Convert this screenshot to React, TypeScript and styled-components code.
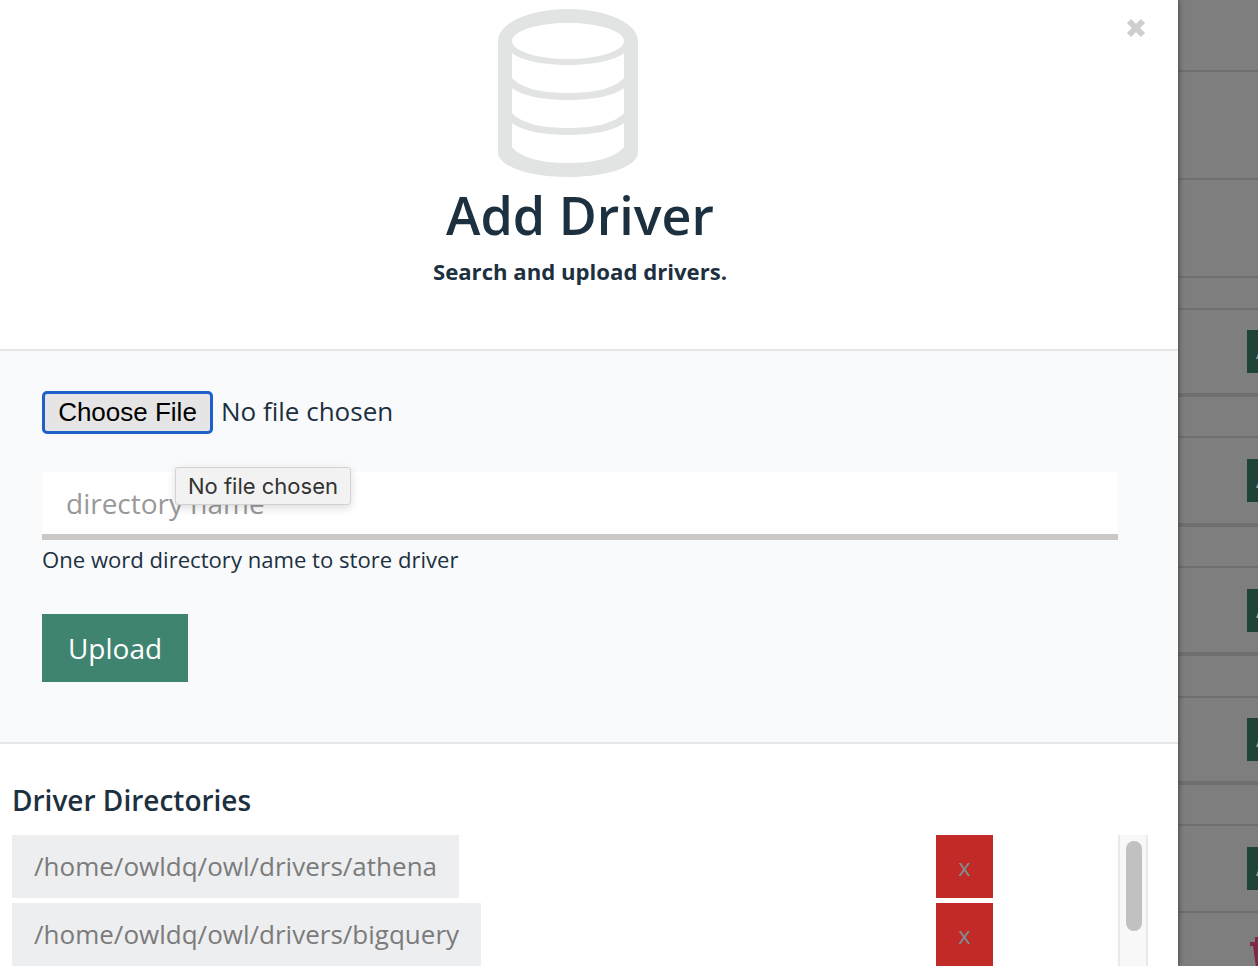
import { FC } from "react";
import styled, { createGlobalStyle } from "styled-components";

const ink = "#1d3040";

const GlobalStyle = createGlobalStyle`
  html, body {
    margin: 0;
    height: 100%;
    overflow: hidden;
    font-family: "Open Sans", "Liberation Sans", sans-serif;
    color: ${ink};
    background: #808080;
  }
  * {
    box-sizing: border-box;
  }
`;

// rows of the table behind the dialog: height, bottom rule, has action button
const backdropRows = [
  { height: 72, rule: 2, action: false },
  { height: 108, rule: 2, action: false },
  { height: 98, rule: 2, action: false },
  { height: 32, rule: 2, action: false },
  { height: 87, rule: 4, action: true },
  { height: 41, rule: 2, action: false },
  { height: 89, rule: 4, action: true },
  { height: 41, rule: 2, action: false },
  { height: 88, rule: 4, action: true },
  { height: 42, rule: 2, action: false },
  { height: 87, rule: 4, action: true },
  { height: 41, rule: 2, action: false },
  { height: 87, rule: 2, action: true },
];

const directories = ["/home/owldq/owl/drivers/athena", "/home/owldq/owl/drivers/bigquery"];

const DatabaseIcon: FC = () => (
  <IconSvg viewBox="0 0 140 169" width="140" height="169">
    <path
      fill="#e2e3e3"
      fillRule="evenodd"
      d="M0 32C0 14 32 0 70 0s70 14 70 32v111c0 15-32 25-70 25S0 158 0 143ZM14 32c0 10 25 18 56 18s56-8 56-18-25-18-56-18-56 8-56 18ZM14 44c10 8 32 12 56 12s46-4 56-12v25c-10 11-32 15-56 15s-46-4-56-15ZM14 79c10 8 32 12 56 12s46-4 56-12v25c-10 11-32 15-56 15s-46-4-56-15ZM14 114c10 8 32 12 56 12s46-4 56-12v24c-10 12-32 16-56 16s-46-4-56-16Z"
    />
  </IconSvg>
);

const App: FC = () => {
  return (
    <Page>
      <GlobalStyle />
      <Dialog>
        <CloseButton aria-label="close">
          <svg viewBox="0 0 20 20" width="20" height="20">
            <path d="M3 3l14 14M17 3L3 17" stroke="#cfcfcf" strokeWidth="6" fill="none" />
          </svg>
        </CloseButton>
        <Header>
          <DatabaseIcon />
          <Title>Add Driver</Title>
          <Subtitle>Search and upload drivers.</Subtitle>
        </Header>
        <UploadForm>
          <FileRow>
            <ChooseButton type="button">Choose File</ChooseButton>
            <FileStatus>No file chosen</FileStatus>
          </FileRow>
          <DirectoryInput placeholder="directory name" />
          <HelpText>One word directory name to store driver</HelpText>
          <UploadButton type="button">Upload</UploadButton>
          <Tooltip>No file chosen</Tooltip>
        </UploadForm>
        <DirectoriesSection>
          <SectionTitle>Driver Directories</SectionTitle>
          <ListFrame>
            <DirectoryList>
              {directories.map((dir) => (
                <DirectoryRow key={dir}>
                  <DirectoryName>{dir}</DirectoryName>
                  <RemoveButton type="button">x</RemoveButton>
                </DirectoryRow>
              ))}
            </DirectoryList>
            <ScrollTrack>
              <ScrollThumb />
            </ScrollTrack>
          </ListFrame>
        </DirectoriesSection>
      </Dialog>
      <Backdrop>
        {backdropRows.map((row, i) => (
          <BackdropRow key={i} $height={row.height} $rule={row.rule}>
            {row.action && <ActionButton>A</ActionButton>}
          </BackdropRow>
        ))}
        <LastRow>
          <svg viewBox="0 0 10 30" width="10" height="30">
            <path d="M5 0h5v5H5ZM0 5h10v4H0ZM3 9h7v21H6Z" fill="#7d2a47" />
          </svg>
        </LastRow>
      </Backdrop>
    </Page>
  );
};

export default App;

const Page = styled.div`
  display: flex;
  width: 100%;
  height: 100vh;
  overflow: hidden;
`;

const Dialog = styled.div`
  position: relative;
  z-index: 1;
  flex: 0 0 1178px;
  height: 100%;
  background: #fff;
  box-shadow: 0 0 6px rgba(0, 0, 0, 0.55);
`;

const CloseButton = styled.div`
  position: absolute;
  top: 18px;
  left: 1126px;
  width: 20px;
  height: 20px;
  line-height: 0;
`;

const Header = styled.header`
  height: 351px;
  padding: 9px 18px 0 0;
  display: flex;
  flex-direction: column;
  align-items: center;
  border-bottom: 2px solid #e6e6e6;
`;

const IconSvg = styled.svg`
  display: block;
  margin-right: 24px;
  flex: none;
`;

const Title = styled.h1`
  margin: 3px 0 0;
  font-size: 52px;
  line-height: 68px;
  font-weight: 600;
`;

const Subtitle = styled.p`
  margin: 7px 0 0;
  font-size: 22.15px;
  line-height: 30px;
  font-weight: 700;
`;

const UploadForm = styled.section`
  position: relative;
  height: 393px;
  padding: 40px 60px 0 42px;
  background: #f9fafc;
  border-bottom: 2px solid #e6e6e6;
`;

const FileRow = styled.div`
  display: flex;
  align-items: center;
  gap: 8px;
`;

const ChooseButton = styled.button`
  width: 171px;
  height: 43px;
  padding: 0;
  background: #e5e5e5;
  border: 3px solid #1f5fc9;
  border-radius: 5px;
  color: #000;
  font-family: "Liberation Sans", Arial, sans-serif;
  font-size: 26px;
`;

const FileStatus = styled.span`
  padding-bottom: 4px;
  font-size: 26px;
  line-height: 34px;
`;

const DirectoryInput = styled.input`
  display: block;
  width: 100%;
  height: 68px;
  margin-top: 38px;
  padding: 0 24px;
  background: #fff;
  border: 0;
  border-bottom: 6px solid #cbc9c7;
  border-radius: 0;
  outline: none;
  font-family: inherit;
  font-size: 28px;
  color: ${ink};

  &::placeholder {
    color: #999;
    opacity: 1;
  }
`;

const HelpText = styled.p`
  margin: 4px 0 0;
  font-size: 22.1px;
  line-height: 30px;
`;

const UploadButton = styled.button`
  display: block;
  width: 146px;
  height: 68px;
  margin-top: 40px;
  padding: 0;
  background: #3f8470;
  border: 0;
  color: #fff;
  font-family: inherit;
  font-size: 28px;
`;

const Tooltip = styled.div`
  position: absolute;
  top: 116px;
  left: 175px;
  width: 176px;
  height: 38px;
  padding-left: 12px;
  background: #f2f2f2;
  border: 1px solid #d2d2d2;
  border-radius: 3px;
  box-shadow: 0 3px 10px rgba(0, 0, 0, 0.14);
  color: #333;
  font-family: Inter, "Open Sans", sans-serif;
  font-size: 22px;
  line-height: 37px;
  white-space: nowrap;
`;

const DirectoriesSection = styled.section`
  padding: 36px 30px 0 12px;
`;

const SectionTitle = styled.h2`
  margin: 0 0 15px;
  font-size: 28px;
  line-height: 40px;
  font-weight: 600;
`;

const ListFrame = styled.div`
  display: flex;
  justify-content: space-between;
`;

const DirectoryList = styled.div`
  display: flex;
  flex-direction: column;
  gap: 5px;
`;

const DirectoryRow = styled.div`
  display: grid;
  grid-template-columns: 924px 57px;
  height: 63px;
`;

const DirectoryName = styled.span`
  justify-self: start;
  padding: 0 22px;
  background: #edeef0;
  color: #7b7b7b;
  font-size: 26.03px;
  line-height: 63px;
`;

const RemoveButton = styled.button`
  padding: 0;
  background: #c12a27;
  border: 0;
  color: #7f8c8d;
  font-family: inherit;
  font-size: 24px;
`;

const ScrollTrack = styled.div`
  width: 30px;
  height: 131px;
  padding: 6px 6px 0 8px;
  background: #f8f8f8;
  border-left: 2px solid #e9e9e9;
  border-right: 2px solid #e9e9e9;
`;

const ScrollThumb = styled.div`
  width: 16px;
  height: 90px;
  margin-left: -2px;
  background: #c1c1c1;
  border-radius: 8px;
`;

const Backdrop = styled.div`
  flex: 1;
  min-width: 0;
  display: flex;
  flex-direction: column;
  background: #7e7e7e;
  overflow: hidden;
`;

const BackdropRow = styled.div<{ $height: number; $rule: number }>`
  flex: none;
  height: ${(p) => p.$height}px;
  display: flex;
  align-items: center;
  padding-left: 69px;
  border-bottom: ${(p) => p.$rule}px solid #6f6f6f;
`;

const ActionButton = styled.div`
  flex: none;
  width: 60px;
  height: 43px;
  padding-left: 9px;
  background: #1e4438;
  color: #a3a3a3;
  font-size: 20px;
  line-height: 43px;
`;

const LastRow = styled.div`
  flex: 1;
  padding: 24px 0 0 72px;
  line-height: 0;
`;
